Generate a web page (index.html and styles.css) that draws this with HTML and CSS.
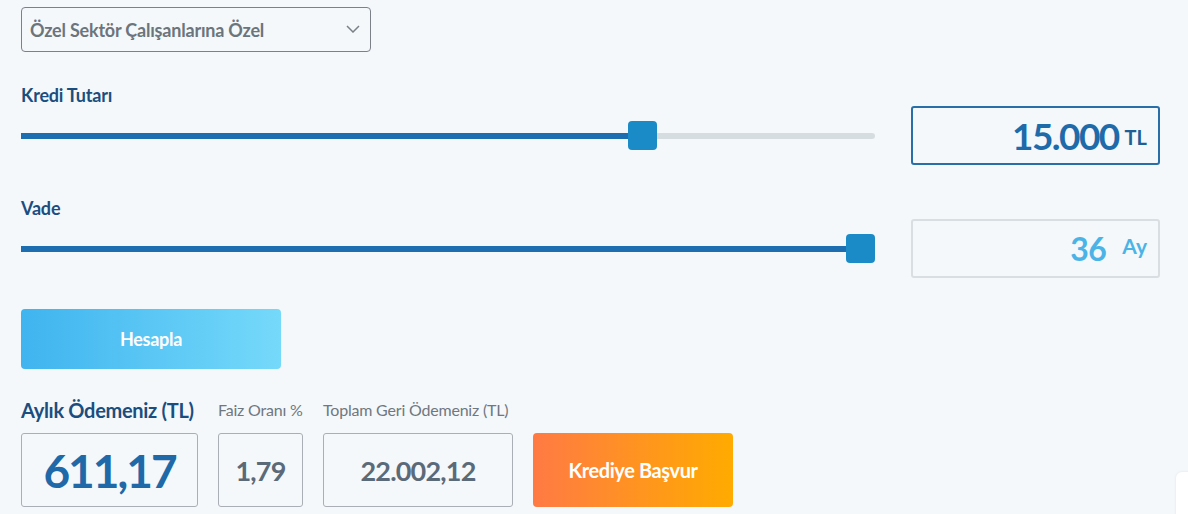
FILE: index.html
```html
<!DOCTYPE html>
<html lang="tr">
<head>
<meta charset="utf-8">
<title>Kredi Hesaplama</title>
<link rel="stylesheet" href="styles.css">
</head>
<body>
<div class="calc">
  <div class="select">
    <span class="select-text">Özel Sektör Çalışanlarına Özel</span>
    <svg class="chevron" width="14" height="8" viewBox="0 0 14 8"><path d="M1 1 L7 7 L13 1" fill="none" stroke="#7a8088" stroke-width="1.5"/></svg>
  </div>

  <div class="field field-amount">
    <div class="label">Kredi Tutarı</div>
    <div class="row">
      <div class="slider">
        <div class="track"><div class="fill" style="width:72.5%"></div></div>
        <div class="thumb" style="left:607px"></div>
      </div>
      <div class="value-box active">
        <span class="num">15.000</span><span class="unit">TL</span>
      </div>
    </div>
  </div>

  <div class="field field-term">
    <div class="label">Vade</div>
    <div class="row">
      <div class="slider">
        <div class="track"><div class="fill" style="width:100%"></div></div>
        <div class="thumb" style="left:825px"></div>
      </div>
      <div class="value-box light">
        <span class="num">36</span><span class="unit">Ay</span>
      </div>
    </div>
  </div>

  <button class="btn-calc">Hesapla</button>

  <div class="results">
    <div class="res res-main">
      <div class="res-label main">Aylık Ödemeniz (TL)</div>
      <div class="res-box"><span class="big">611,17</span></div>
    </div>
    <div class="res res-rate">
      <div class="res-label">Faiz Oranı %</div>
      <div class="res-box"><span class="mid">1,79</span></div>
    </div>
    <div class="res res-total">
      <div class="res-label">Toplam Geri Ödemeniz (TL)</div>
      <div class="res-box"><span class="mid">22.002,12</span></div>
    </div>
    <button class="btn-apply">Krediye Başvur</button>
  </div>
</div>
<div class="corner-widget"></div>
</body>
</html>
```

FILE: styles.css
```css
* { box-sizing: border-box; }
html, body { margin: 0; padding: 0; }
body {
  background: #f4f8fb;
  font-family: Lato, "Open Sans", sans-serif;
  width: 1188px;
  height: 514px;
  overflow: hidden;
  position: relative;
}
.calc {
  padding: 7px 28px 0 21px;
}
.select {
  width: 350px;
  height: 45px;
  border: 1px solid #7b8188;
  border-radius: 4px;
  display: flex;
  align-items: center;
  justify-content: space-between;
  padding: 0 10px 0 8px;
}
.select-text {
  font-size: 18px;
  font-weight: 700;
  color: #6c747c;
  letter-spacing: -0.2px;
}
.chevron { margin-top: -2px; }

.field-amount { margin-top: 33px; }
.field-term { margin-top: 33px; }
.label {
  font-size: 18px;
  line-height: 20px;
  font-weight: 700;
  color: #1b4e7f;
  letter-spacing: -0.2px;
  margin-bottom: 1px;
}
.row {
  display: flex;
  align-items: center;
  gap: 36px;
}
.slider {
  flex: 0 0 854px;
  height: 30px;
  position: relative;
  display: flex;
  align-items: center;
}
.track {
  width: 100%;
  height: 6px;
  background: #d6dde0;
  border-radius: 0 3px 3px 0;
  overflow: hidden;
}
.fill {
  height: 100%;
  background: #1d6eb0;
}
.thumb {
  position: absolute;
  top: 0;
  width: 29px;
  height: 29px;
  border-radius: 4px;
  background: #1a8bc7;
}
.value-box {
  width: 249px;
  height: 59px;
  border-radius: 3px;
  display: flex;
  align-items: center;
  justify-content: flex-end;
  padding-right: 11px;
}
.value-box.active { border: 2px solid #2a6ea7; }
.value-box.light { border: 2px solid #d9dee2; }
.value-box .num {
  font-weight: 700;
}
.active .num {
  font-size: 37px;
  color: #1f6aa9;
  letter-spacing: -1.6px;
  margin-right: 6px;
}
.active .unit {
  font-size: 20px;
  font-weight: 700;
  color: #1f5f96;
  margin-top: 2px;
}
.light .num {
  font-size: 32px;
  color: #4cb3e6;
  margin-right: 16px;
  letter-spacing: -0.5px;
}
.light .unit {
  font-size: 21px;
  font-weight: 700;
  color: #4cb3e6;
  margin-top: -6px;
}

.btn-calc {
  display: block;
  margin-top: 31px;
  width: 260px;
  height: 60px;
  border: 0;
  border-radius: 4px;
  background: linear-gradient(90deg, #3fb4ef 0%, #75d9fa 100%);
  color: #fff;
  font-family: Lato, "Open Sans", sans-serif;
  font-size: 18px;
  font-weight: 700;
  letter-spacing: -0.3px;
}

.results {
  margin-top: 31px;
  display: flex;
  align-items: flex-end;
  gap: 20px;
}
.res-label {
  font-size: 16px;
  line-height: 20px;
  color: #6f777f;
  letter-spacing: -0.2px;
  margin-bottom: 13px;
  white-space: nowrap;
}
.res-label.main {
  font-size: 20px;
  font-weight: 700;
  color: #1b4e7f;
  letter-spacing: -0.3px;
}
.res-box {
  height: 74px;
  border: 1px solid #a9afb5;
  border-radius: 3px;
  display: flex;
  align-items: center;
  justify-content: center;
}
.res-main .res-box { width: 177px; }
.res-rate .res-box { width: 85px; }
.res-total .res-box { width: 190px; }
.big {
  font-size: 46px;
  font-weight: 700;
  color: #1f69a8;
  letter-spacing: -2px;
}
.mid {
  font-size: 27px;
  font-weight: 700;
  color: #5b6a79;
  letter-spacing: -0.8px;
}
.btn-apply {
  width: 200px;
  height: 74px;
  border: 0;
  border-radius: 4px;
  background: linear-gradient(90deg, #ff7a44 0%, #ffab00 100%);
  color: #fff;
  font-family: Lato, "Open Sans", sans-serif;
  font-size: 20px;
  font-weight: 700;
  letter-spacing: -0.4px;
}
.corner-widget {
  position: absolute;
  left: 1176px;
  top: 472px;
  width: 40px;
  height: 60px;
  background: #fff;
  border-radius: 6px;
  box-shadow: 0 0 3px rgba(0, 0, 0, 0.08);
}
```
